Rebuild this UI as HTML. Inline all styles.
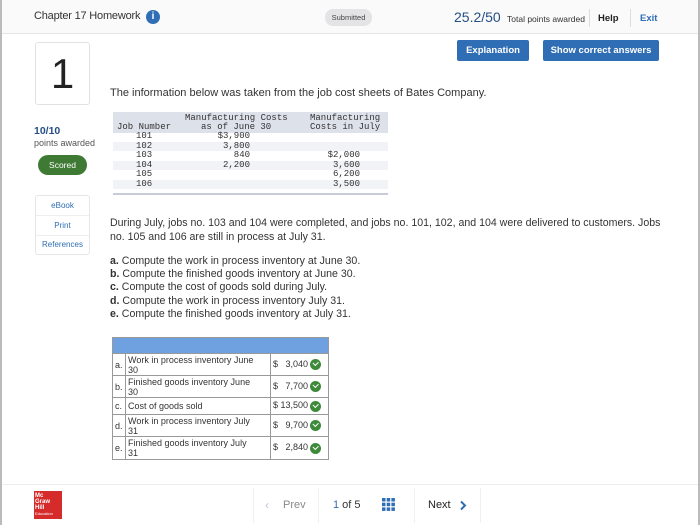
<!DOCTYPE html>
<html><head><meta charset="utf-8"><style>
*{margin:0;padding:0;box-sizing:border-box}
body{width:700px;height:525px;background:#fff;font-family:"Liberation Sans",sans-serif;color:#222;position:relative;overflow:hidden}
.a{position:absolute;white-space:nowrap}
.mono{font-family:"Liberation Mono",monospace;font-size:9px;color:#333}
.btn{position:absolute;background:#2f6eb5;color:#fff;font-weight:bold;font-size:9.5px;text-align:center;border-radius:2px;line-height:21px}
table.ans{position:absolute;left:112px;top:337px;border-collapse:collapse;font-size:9px;color:#333}
table.ans td{border:1px solid #999;padding:0 2px;line-height:10px}
.ck{display:inline-block;width:11px;height:11px;border-radius:50%;background:#3e8a3b;vertical-align:middle;position:relative;margin-left:2px}
.ck:after{content:"";position:absolute;left:3px;top:2px;width:4px;height:2.5px;border-left:1.5px solid #fff;border-bottom:1.5px solid #fff;transform:rotate(-45deg)}
</style></head><body>
<div class="a" style="left:0;top:0;width:2px;height:525px;background:#bbb"></div>
<div class="a" style="right:0;top:0;width:2px;height:525px;background:#bbb"></div>
<div class="a" style="left:2px;top:0;width:696px;height:34px;background:#fafafa;border-bottom:1px solid #e6e6e6"></div>
<div class="a" style="left:34px;top:10px;font-size:11px;color:#333;letter-spacing:-0.2px">Chapter 17 Homework</div>
<div class="a" style="left:146px;top:10px;width:14px;height:14px;border-radius:50%;background:#2f6eb5;color:#fff;font-size:10px;font-weight:bold;text-align:center;line-height:14px">i</div>
<div class="a" style="left:325px;top:9px;width:47px;height:17px;border-radius:8px;background:#e4e4e6;font-size:7.5px;color:#444;text-align:center;line-height:17px">Submitted</div>
<div class="a" style="left:454px;top:9px;font-size:14px;color:#264e86">25.2/50</div>
<div class="a" style="left:507px;top:14px;font-size:8.5px;color:#333">Total points awarded</div>
<div class="a" style="left:589px;top:9px;width:1px;height:18px;background:#ddd"></div>
<div class="a" style="left:598px;top:13px;font-size:9.5px;font-weight:bold;color:#222">Help</div>
<div class="a" style="left:630px;top:9px;width:1px;height:18px;background:#ddd"></div>
<div class="a" style="left:640px;top:13px;font-size:9.5px;font-weight:bold;color:#2f6eb5">Exit</div>

<div class="a" style="left:35px;top:42px;width:55px;height:63px;border:1px solid #e2e2e2;border-radius:3px;font-size:42px;text-align:center;line-height:62px;color:#222">1</div>
<div class="btn" style="left:457px;top:40px;width:72px;height:21px">Explanation</div>
<div class="btn" style="left:543px;top:40px;width:116px;height:21px">Show correct answers</div>
<div class="a" style="left:110px;top:87px;font-size:11px;color:#333">The information below was taken from the job cost sheets of Bates Company.</div>

<div class="a" style="left:34px;top:125px;font-size:10.5px;color:#264e86;font-weight:bold">10/10</div>
<div class="a" style="left:34px;top:138px;font-size:9px;color:#555">points awarded</div>
<div class="a" style="left:38px;top:155px;width:49px;height:20px;border-radius:10px;background:#3f7a35;color:#fff;font-size:8.5px;text-align:center;line-height:20px">Scored</div>
<div class="a" style="left:35px;top:195px;width:55px;height:60px;border:1px solid #e6e6e6;border-radius:3px;font-size:8px;color:#2f6eb5;text-align:center">
<div style="height:20px;line-height:19px;border-bottom:1px solid #eee">eBook</div>
<div style="height:20px;line-height:20px;border-bottom:1px solid #eee">Print</div>
<div style="height:18px;line-height:18px">References</div></div>

<div class="a" style="left:113px;top:112px;width:275px;height:21px;background:#dde1ea"></div>
<div class="a" style="left:113px;top:142px;width:275px;height:9px;background:#f2f3f6"></div>
<div class="a" style="left:113px;top:161px;width:275px;height:9px;background:#f2f3f6"></div>
<div class="a" style="left:113px;top:180px;width:275px;height:9px;background:#f2f3f6"></div>
<div class="a" style="left:113px;top:193px;width:275px;height:2px;background:#c8ccd6"></div>
<div class="a mono" style="left:185px;top:113px">Manufacturing Costs</div>
<div class="a mono" style="left:310px;top:113px">Manufacturing</div>
<div class="a mono" style="left:117px;top:122px">Job Number</div>
<div class="a mono" style="left:201px;top:122px">as of June 30</div>
<div class="a mono" style="left:310px;top:122px">Costs in July</div>
<div class="a mono" style="left:136px;top:132px;line-height:9.6px">101<br>102<br>103<br>104<br>105<br>106</div>
<div class="a mono" style="left:215px;top:132px;line-height:9.6px;text-align:right;width:35px">$3,900<br>3,800<br>840<br>2,200</div>
<div class="a mono" style="left:320px;top:151px;line-height:9.6px;text-align:right;width:40px">$2,000<br>3,600<br>6,200<br>3,500</div>

<div class="a" style="left:110px;top:216px;font-size:10.6px;color:#333;line-height:14px">During July, jobs no. 103 and 104 were completed, and jobs no. 101, 102, and 104 were delivered to customers. Jobs<br>no. 105 and 106 are still in process at July 31.</div>
<div class="a" style="left:110px;top:255px;font-size:10.6px;color:#333;line-height:13.2px"><b>a.</b> Compute the work in process inventory at June 30.<br><b>b.</b> Compute the finished goods inventory at June 30.<br><b>c.</b> Compute the cost of goods sold during July.<br><b>d.</b> Compute the work in process inventory July 31.<br><b>e.</b> Compute the finished goods inventory at July 31.</div>

<table class="ans">
<tr style="height:16px"><td colspan="3" style="background:#6fa0e0;border-color:#999"></td></tr>
<tr style="height:22px"><td style="width:13px">a.</td><td style="width:145px">Work in process inventory June<br>30</td><td style="width:58px">$&nbsp;&nbsp;&nbsp;3,040<span class="ck"></span></td></tr>
<tr style="height:22px"><td>b.</td><td>Finished goods inventory June<br>30</td><td>$&nbsp;&nbsp;&nbsp;7,700<span class="ck"></span></td></tr>
<tr style="height:17px"><td>c.</td><td>Cost of goods sold</td><td>$&nbsp;13,500<span class="ck"></span></td></tr>
<tr style="height:22px"><td>d.</td><td>Work in process inventory July<br>31</td><td>$&nbsp;&nbsp;&nbsp;9,700<span class="ck"></span></td></tr>
<tr style="height:23px"><td>e.</td><td>Finished goods inventory July<br>31</td><td>$&nbsp;&nbsp;&nbsp;2,840<span class="ck"></span></td></tr>
</table>

<div class="a" style="left:2px;top:484px;width:696px;height:1px;background:#eee"></div>
<div class="a" style="left:34px;top:491px;width:28px;height:28px;background:#d52b2b;color:#fff;font-size:6px;line-height:6px;padding:2px 1px;font-weight:bold">Mc<br>Graw<br>Hill<br><span style="font-size:4px;font-weight:normal">Education</span></div>
<div class="a" style="left:253px;top:488px;width:1px;height:35px;background:#f0f0f0"></div>
<div class="a" style="left:318px;top:488px;width:1px;height:35px;background:#f0f0f0"></div>
<div class="a" style="left:414px;top:488px;width:1px;height:35px;background:#f0f0f0"></div>
<div class="a" style="left:480px;top:488px;width:1px;height:35px;background:#f0f0f0"></div>
<div class="a" style="left:265px;top:498px;font-size:12px;color:#b9c8dc">&#x2039;</div>
<div class="a" style="left:283px;top:499px;font-size:11px;color:#888">Prev</div>
<div class="a" style="left:333px;top:499px;font-size:11px;color:#333"><span style="color:#2f6eb5">1</span> of 5</div>
<svg class="a" style="left:382px;top:498px" width="13" height="13"><g fill="#2f6eb5"><rect x="0" y="0" width="3.5" height="3.5"/><rect x="4.7" y="0" width="3.5" height="3.5"/><rect x="9.4" y="0" width="3.5" height="3.5"/><rect x="0" y="4.7" width="3.5" height="3.5"/><rect x="4.7" y="4.7" width="3.5" height="3.5"/><rect x="9.4" y="4.7" width="3.5" height="3.5"/><rect x="0" y="9.4" width="3.5" height="3.5"/><rect x="4.7" y="9.4" width="3.5" height="3.5"/><rect x="9.4" y="9.4" width="3.5" height="3.5"/></g></svg>
<div class="a" style="left:428px;top:499px;font-size:11px;color:#222">Next</div>
<svg class="a" style="left:459px;top:500px" width="8" height="11"><path d="M2 1.5 L6 5.5 L2 9.5" stroke="#2f6eb5" stroke-width="2" fill="none"/></svg>
</body></html>
